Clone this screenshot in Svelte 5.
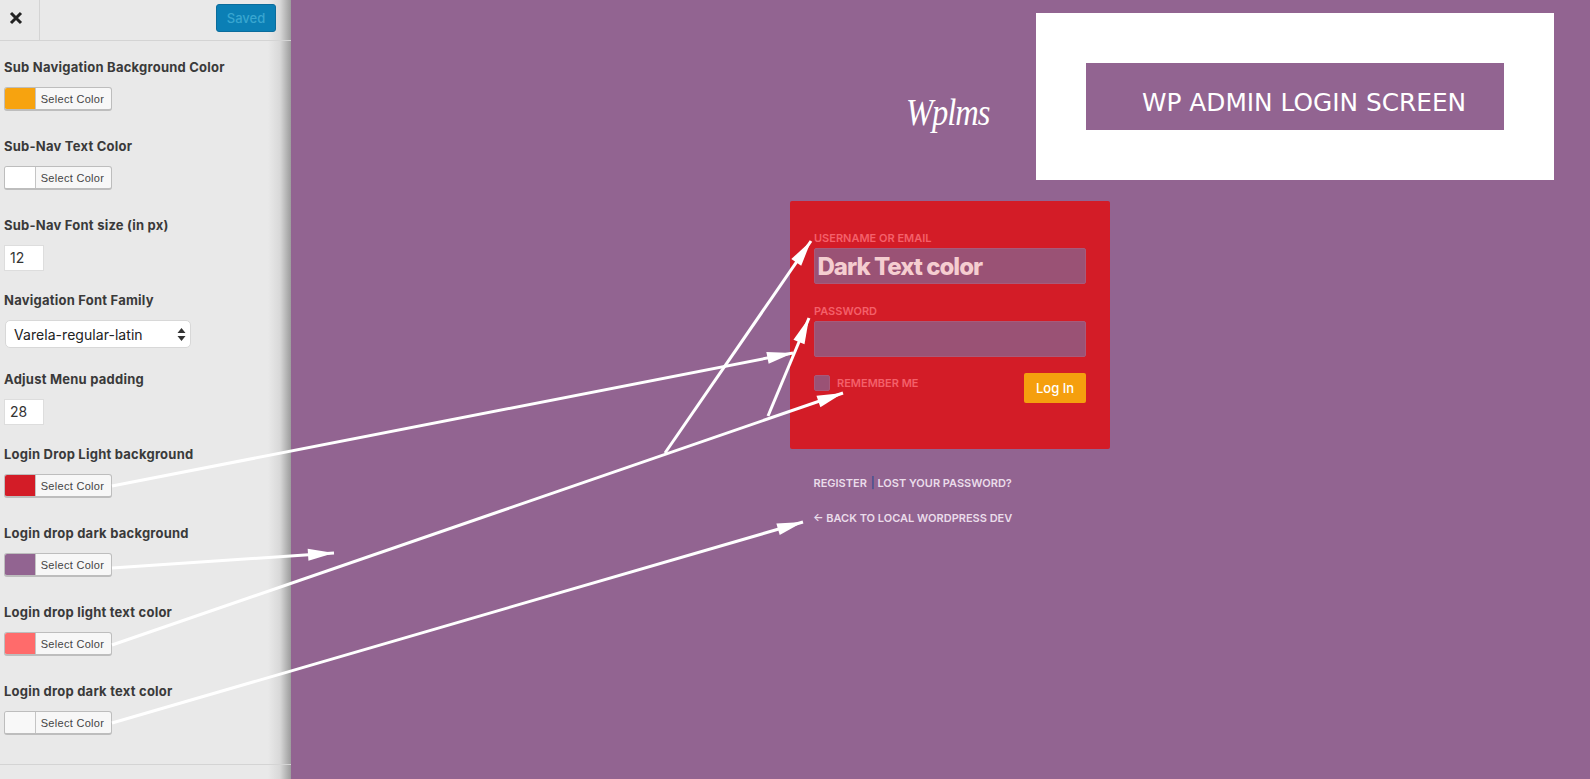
<script>
	const fields = [
		{ label: "Sub Navigation Background Color", type: "color", color: "#f7a30f" },
		{ label: "Sub-Nav Text Color", type: "color", color: "#ffffff" },
		{ label: "Sub-Nav Font size (in px)", type: "number", value: "12" },
		{ label: "Navigation Font Family", type: "select", value: "Varela-regular-latin" },
		{ label: "Adjust Menu padding", type: "number", value: "28" },
		{ label: "Login Drop Light background", type: "color", color: "#d31c27" },
		{ label: "Login drop dark background", type: "color", color: "#926491" },
		{ label: "Login drop light text color", type: "color", color: "#ff6b6b" },
		{ label: "Login drop dark text color", type: "color", color: "#f8f8f8" }
	];

	const arrows = [
		{ x1: 112, y1: 486, x2: 793, y2: 353 },
		{ x1: 112, y1: 568, x2: 334, y2: 553 },
		{ x1: 112, y1: 645, x2: 843, y2: 393 },
		{ x1: 112, y1: 723, x2: 803, y2: 522 },
		{ x1: 665, y1: 453, x2: 811, y2: 241 },
		{ x1: 768, y1: 416, x2: 809, y2: 318 }
	];

	function head(a) {
		const dx = a.x2 - a.x1;
		const dy = a.y2 - a.y1;
		const len = Math.hypot(dx, dy);
		const ux = dx / len;
		const uy = dy / len;
		const bx = a.x2 - ux * 26;
		const by = a.y2 - uy * 26;
		return `${a.x2},${a.y2} ${bx - uy * 6},${by + ux * 6} ${bx + uy * 6},${by - ux * 6}`;
	}
</script>

<div class="page">
	<aside>
		<header>
			<button class="close" aria-label="Close">
				<svg width="14" height="14" viewBox="0 0 14 14"><path d="M2 2l10 10M12 2L2 12" stroke="#222" stroke-width="3" /></svg>
			</button>
			<button class="saved">Saved</button>
		</header>
		<div class="fields">
			{#each fields as f}
				<div class="field is-{f.type}">
					<span class="label">{f.label}</span>
					{#if f.type === "color"}
						<button class="picker">
							<span class="swatch" style="background: {f.color}"></span>
							<span class="pick-text">Select Color</span>
						</button>
					{:else if f.type === "number"}
						<div class="num">{f.value}</div>
					{:else}
						<div class="select">
							<span>{f.value}</span>
							<svg width="9" height="13" viewBox="0 0 9 13"><path d="M4.5 0L8.5 5H.5zM4.5 13L.5 8h8z" fill="#333" /></svg>
						</div>
					{/if}
				</div>
			{/each}
		</div>
		<div class="foot"></div>
	</aside>

	<main>
		<div class="login">
			<div class="logo"><span>Wplms</span></div>
			<div class="card">
				<div class="cap">USERNAME OR EMAIL</div>
				<div class="input">Dark Text color</div>
				<div class="cap second">PASSWORD</div>
				<div class="input"></div>
				<div class="row">
					<div class="remember">
						<span class="check"></span>
						<span class="cap">REMEMBER ME</span>
					</div>
					<button class="login-btn">Log In</button>
				</div>
			</div>
			<div class="links first">REGISTER <span class="sep">|</span> LOST YOUR PASSWORD?</div>
			<div class="links back">← BACK TO LOCAL WORDPRESS DEV</div>
		</div>
		<div class="note">
			<div class="note-inner">WP ADMIN LOGIN SCREEN</div>
		</div>
	</main>

	<svg class="arrows" width="1590" height="779" viewBox="0 0 1590 779">
		{#each arrows as a}
			<line x1={a.x1} y1={a.y1} x2={a.x2} y2={a.y2} stroke="#fff" stroke-width="3" />
			<polygon points={head(a)} fill="#fff" />
		{/each}
	</svg>
</div>

<style>
	:global(body) {
		margin: 0;
		overflow: hidden;
	}

	.page {
		position: relative;
		display: flex;
		width: 1590px;
		height: 779px;
		overflow: hidden;
		background: #926491;
		font-family: "Inter", "Liberation Sans", sans-serif;
	}

	aside {
		flex: 0 0 291px;
		display: flex;
		flex-direction: column;
		background: linear-gradient(to right, #e9e9e9 0, #e9e9e9 268px, #d8d8d8 280px, #9c9c9c 291px);
	}

	header {
		display: flex;
		align-items: center;
		justify-content: space-between;
		height: 40px;
		padding-right: 15px;
		border-bottom: 1px solid #d4d4d4;
		box-sizing: content-box;
	}

	.close {
		width: 40px;
		height: 40px;
		padding: 0 8px 4px 0;
		border: 0;
		border-right: 1px solid #d4d4d4;
		background: none;
		display: flex;
		align-items: center;
		justify-content: center;
	}

	.saved {
		width: 60px;
		height: 28px;
		margin-bottom: 4px;
		border: 1px solid #0b6c9c;
		border-radius: 3px;
		background: #0b7fb5;
		color: #38a6d0;
		font: 500 13px "Inter", sans-serif;
	}

	.fields {
		flex: 1;
		padding: 18px 0 0 4px;
	}

	.field {
		display: flex;
		flex-direction: column;
		align-items: flex-start;
		margin-bottom: 27px;
	}

	.field.is-number {
		margin-bottom: 21px;
	}

	.field.is-select {
		margin-bottom: 23px;
	}

	.label {
		font-size: 13px;
		font-weight: 700;
		line-height: 16px;
		letter-spacing: 0.23px;
		color: #3a3a3a;
		margin-bottom: 12px;
	}

	.picker {
		display: flex;
		align-items: stretch;
		width: 108px;
		height: 24px;
		padding: 0;
		border: 1px solid #bdbdbd;
		border-bottom-width: 2px;
		border-radius: 3px;
		background: #f7f7f7;
		overflow: hidden;
	}

	.swatch {
		width: 30px;
		border-right: 1px solid #c4c4c4;
	}

	.pick-text {
		flex: 1;
		padding-right: 2px;
		font-size: 11px;
		line-height: 22px;
		letter-spacing: 0.3px;
		color: #444;
		text-align: center;
	}

	.num {
		width: 40px;
		height: 26px;
		box-sizing: border-box;
		padding-left: 5px;
		border: 1px solid #ddd;
		background: #fff;
		font-size: 14px;
		line-height: 24px;
		color: #333;
	}

	.select {
		display: flex;
		align-items: center;
		justify-content: space-between;
		width: 186px;
		height: 28px;
		box-sizing: border-box;
		margin: 0 0 0 1px;
		padding: 0 4px 0 8px;
		border: 1px solid #d8d8d8;
		border-radius: 5px;
		background: #fff;
		font-size: 14px;
		letter-spacing: 0.05px;
		color: #222;
	}

	.foot {
		height: 14px;
		border-top: 1px solid #d4d4d4;
	}

	main {
		flex: 1;
		position: relative;
	}

	.login {
		width: 320px;
		margin-left: 499px;
		padding-top: 96px;
	}

	.logo {
		height: 35px;
		margin-bottom: 70px;
		text-align: center;
		font: italic 400 31px/35px "Liberation Serif", serif;
		letter-spacing: -1px;
		color: #fff;
	}

	.logo span {
		display: inline-block;
		transform: translate(-2px, -2px) scale(1.05, 1.25);
	}

	.card {
		box-sizing: border-box;
		height: 248px;
		padding: 30px 24px 0;
		border-radius: 2px;
		background: #d31c27;
	}

	.cap {
		font-size: 11px;
		font-weight: 600;
		line-height: 14px;
		color: #f4606a;
	}

	.second {
		margin-top: 20px;
		margin-bottom: 3px;
	}

	.input {
		box-sizing: border-box;
		height: 36px;
		margin-top: 3px;
		padding-left: 2.5px;
		border: 1px solid #a85a7a;
		border-radius: 2px;
		background: #9a5275;
		font-size: 24px;
		font-weight: 800;
		line-height: 36px;
		letter-spacing: -1px;
		color: #f5cdd0;
	}

	.row {
		display: flex;
		justify-content: space-between;
		align-items: flex-start;
		margin-top: 16px;
	}

	.remember {
		display: flex;
		align-items: center;
		gap: 7px;
		margin-top: 2px;
	}

	.check {
		width: 16px;
		height: 16px;
		box-sizing: border-box;
		border: 1px solid #a85a7a;
		border-radius: 2px;
		background: #9a5275;
	}

	.login-btn {
		width: 62px;
		height: 30px;
		padding: 0;
		border: 0;
		border-radius: 2px;
		background: #f59f0e;
		color: #fff;
		font: 500 13px "Inter", sans-serif;
	}

	.links {
		margin-left: 23.5px;
		font-size: 11px;
		font-weight: 600;
		line-height: 14px;
		color: #eadcea;
	}

	.first {
		margin-top: 27px;
	}

	.back {
		margin-top: 21px;
		margin-left: 23px;
	}

	.sep {
		margin-left: 1px;
		color: #3f4f8f;
	}

	.note {
		position: absolute;
		left: 745px;
		top: 13px;
		width: 518px;
		height: 167px;
		display: flex;
		align-items: center;
		justify-content: center;
		background: #fff;
	}

	.note-inner {
		box-sizing: border-box;
		width: 418px;
		height: 67px;
		padding-left: 56px;
		background: #926491;
		color: #fff;
		font: 24.8px/79px "DejaVu Sans", sans-serif;
	}

	.arrows {
		position: absolute;
		left: 0;
		top: 0;
		pointer-events: none;
	}
</style>
